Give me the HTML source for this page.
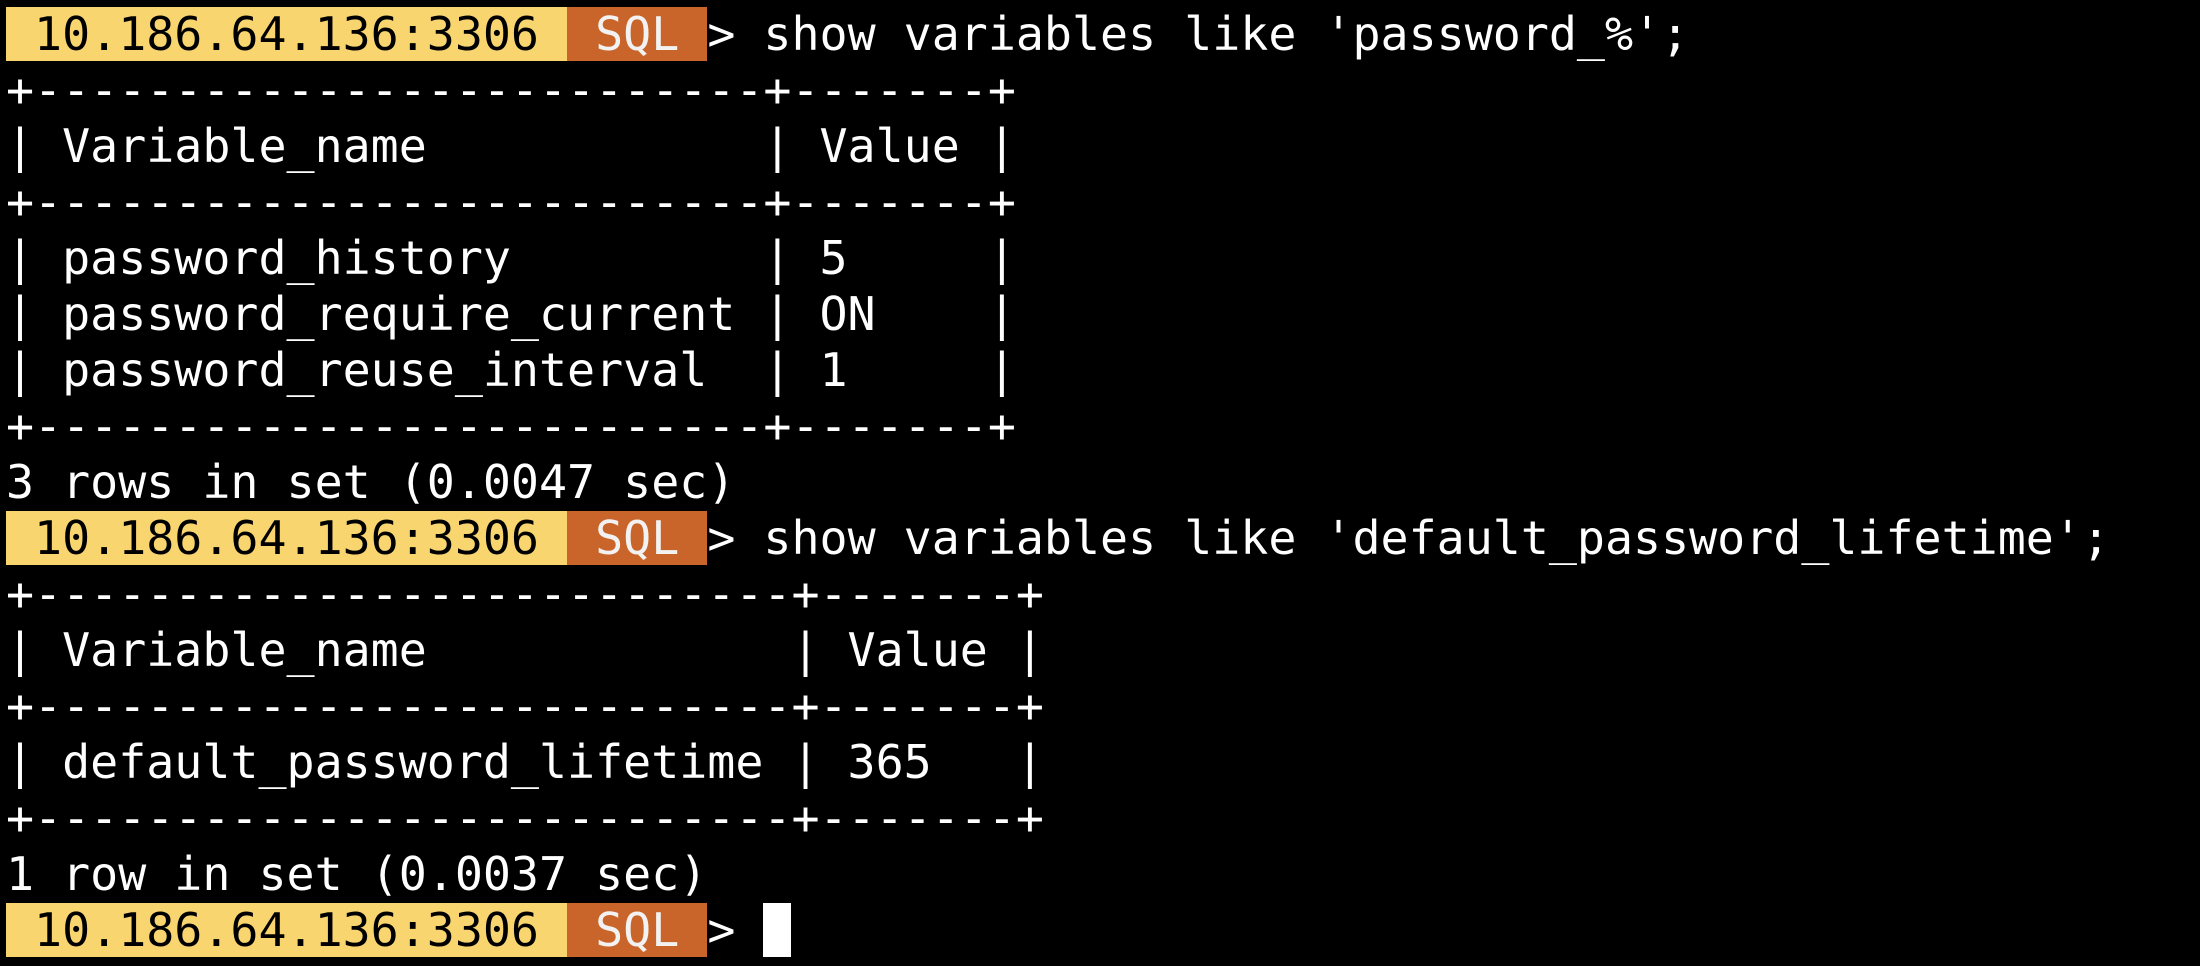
<!DOCTYPE html>
<html><head><meta charset="utf-8"><style>
html,body{margin:0;padding:0;background:#000;width:2200px;height:966px;overflow:hidden}
pre{margin:0;position:absolute;left:6px;top:6px;font-family:"DejaVu Sans Mono","Liberation Mono",monospace;font-size:46.6px;line-height:56px;color:#fff;letter-spacing:0}
.y{background:#f8d56f;color:#000}
.o{background:#c9652a;color:#f2f2f2}
.c{background:#fff}
</style></head><body>
<pre><span class="y"> 10.186.64.136:3306 </span><span class="o"> SQL </span>&gt; show variables like 'password_%';
+--------------------------+-------+
| Variable_name            | Value |
+--------------------------+-------+
| password_history         | 5     |
| password_require_current | ON    |
| password_reuse_interval  | 1     |
+--------------------------+-------+
3 rows in set (0.0047 sec)
<span class="y"> 10.186.64.136:3306 </span><span class="o"> SQL </span>&gt; show variables like 'default_password_lifetime';
+---------------------------+-------+
| Variable_name             | Value |
+---------------------------+-------+
| default_password_lifetime | 365   |
+---------------------------+-------+
1 row in set (0.0037 sec)
<span class="y"> 10.186.64.136:3306 </span><span class="o"> SQL </span>&gt; <span class="c"> </span></pre>
</body></html>
